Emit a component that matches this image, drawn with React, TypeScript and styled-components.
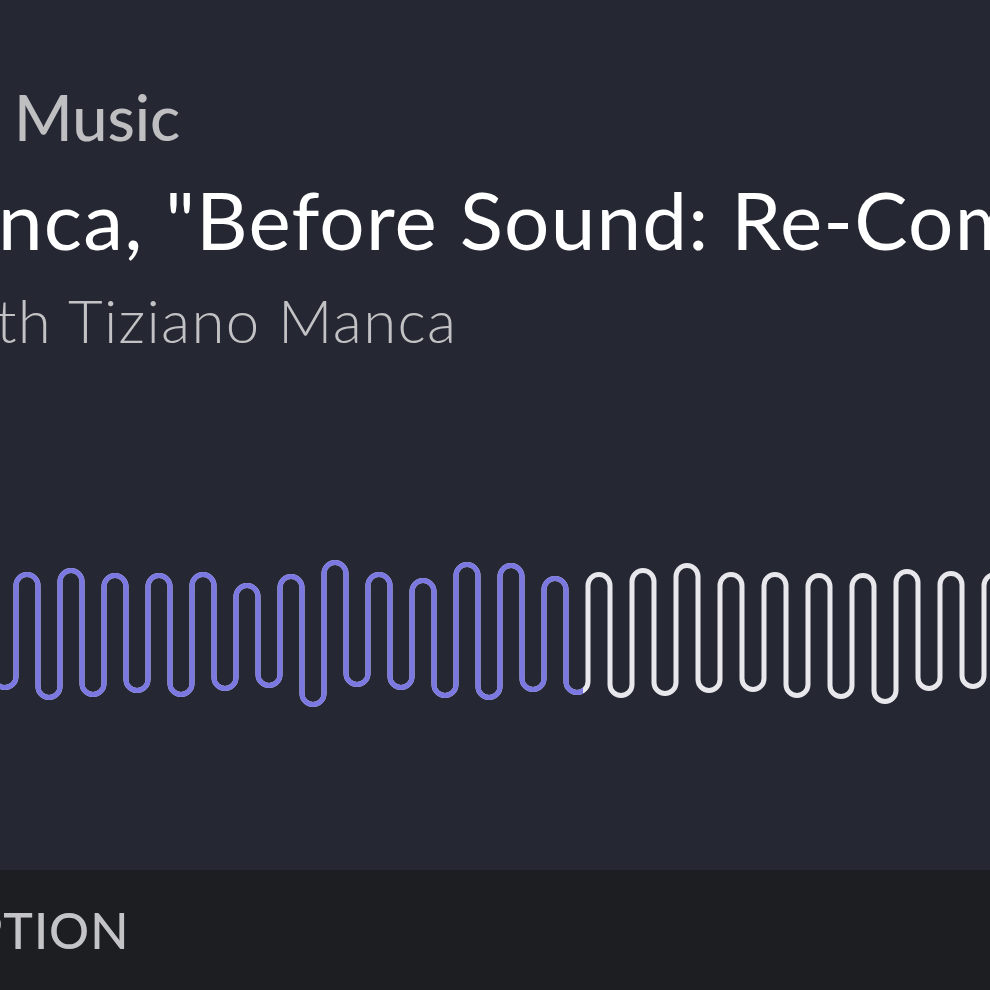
import * as React from 'react';
import styled, { createGlobalStyle } from 'styled-components';

const GlobalStyle = createGlobalStyle`
  html, body {
    margin: 0;
    padding: 0;
    background: #252833;
  }
  * {
    box-sizing: border-box;
  }
`;

const Page = styled.div`
  width: 990px;
  height: 990px;
  display: flex;
  flex-direction: column;
  overflow: hidden;
  font-family: Lato, 'Open Sans', sans-serif;
`;

const Main = styled.div`
  height: 870px;
  display: flex;
  flex-direction: column;
  background: #252833;
`;

const Header = styled.div`
  padding-top: 80px;
  display: flex;
  flex-direction: column;
`;

const Line = styled.div<{
  size: number;
  color: string;
  weight: number;
  indent: number;
  gap: number;
  spacing: number;
}>`
  font-size: ${p => p.size}px;
  color: ${p => p.color};
  font-weight: ${p => p.weight};
  margin-left: ${p => p.indent}px;
  margin-top: ${p => p.gap}px;
  letter-spacing: ${p => p.spacing}px;
  white-space: nowrap;
  line-height: 1.18;
`;

const WaveWrap = styled.div`
  margin-top: auto;
  margin-bottom: 150px;
  height: 180px;

  svg {
    display: block;
  }
`;

const BottomBar = styled.div`
  flex: 1;
  background: #1c1e22;
  display: flex;
  align-items: center;
`;

const TabLabel = styled.div`
  font-size: 50px;
  font-weight: 500;
  color: #c4c4c6;
  margin-left: -28px;
  letter-spacing: 1px;
  white-space: nowrap;
`;

// outer y of each arc; arcs alternate bottom / top, 22px apart
const arcs: number[] = [
  690, 572, 700, 568, 697, 573, 693, 573, 697, 572, 691, 583, 688, 574, 707, 560,
  687, 572, 690, 578, 698, 562, 700, 563, 692, 576, 695, 572, 698, 568, 696, 563,
  693, 572, 692, 572, 698, 573, 699, 573, 704, 569, 691, 571, 689, 572, 695,
];

const TOP = 540;
const R = 11;

function buildPath() {
  let d = `M ${5 - R} 630`;
  arcs.forEach((outer, i) => {
    const cx = 5 + i * 22;
    const isBottom = i % 2 === 0;
    const cy = (isBottom ? outer - 2.5 - R : outer + 2.5 + R) - TOP;
    d += ` L ${cx - R} ${cy} A ${R} ${R} 0 0 ${isBottom ? 0 : 1} ${cx + R} ${cy}`;
  });
  return d;
}

const Wave = () => {
  const d = buildPath();
  return (
    <svg width="990" height="180" viewBox="0 0 990 180">
      <defs>
        <clipPath id="played">
          <rect x="0" y="0" width="583" height="180" />
        </clipPath>
      </defs>
      <path d={d} fill="none" stroke="#e8e8ec" strokeWidth="5" strokeLinecap="round" />
      <path
        d={d}
        fill="none"
        stroke="#7b78e2"
        strokeWidth="5"
        strokeLinecap="round"
        clipPath="url(#played)"
      />
    </svg>
  );
};

export default function App() {
  return (
    <Page>
      <GlobalStyle />
      <Main>
        <Header>
          <Line size={63} color="#bfbfc2" weight={500} indent={14} gap={0} spacing={0}>
            Music
          </Line>
          <Line size={80} color="#ffffff" weight={400} indent={-2} gap={18} spacing={1.2}>
            nca, "Before Sound: Re-Composing
          </Line>
          <Line size={60} color="#c2c2c5" weight={300} indent={-4} gap={18} spacing={1.3}>
            th Tiziano Manca
          </Line>
        </Header>
        <WaveWrap>
          <Wave />
        </WaveWrap>
      </Main>
      <BottomBar>
        <TabLabel>PTION</TabLabel>
      </BottomBar>
    </Page>
  );
}
